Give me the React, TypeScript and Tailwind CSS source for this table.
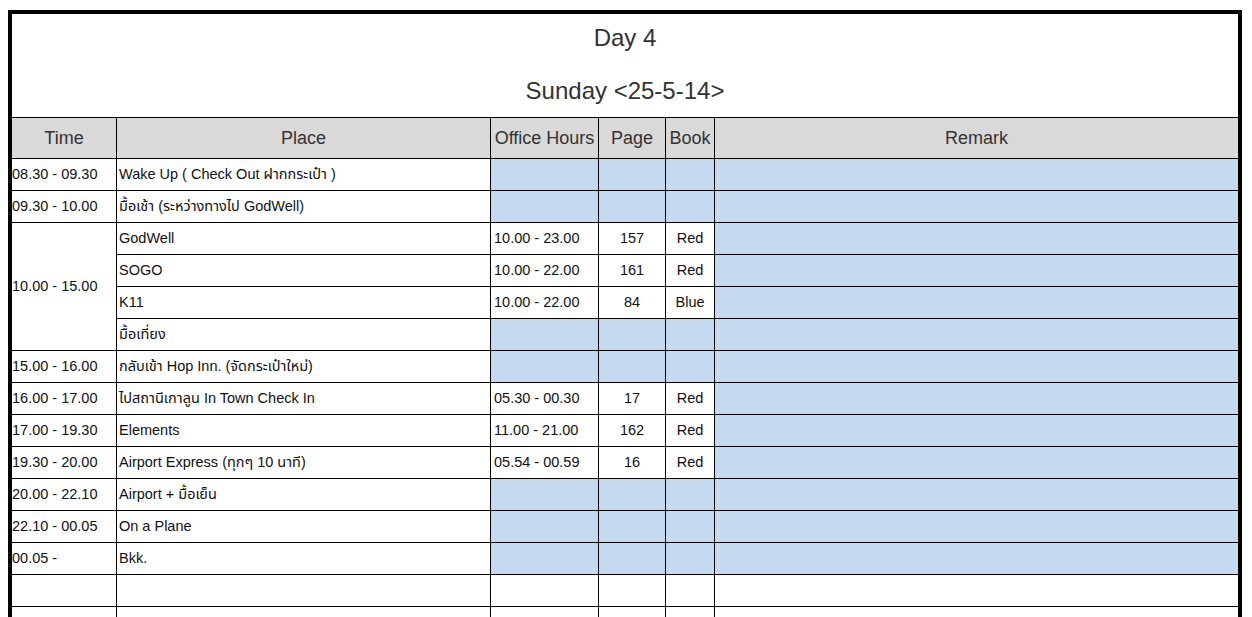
import React from 'react';

type Row = {
  time?: string;
  span?: number;
  place: string;
  hours?: string;
  page?: string;
  book?: string;
  blue?: boolean;
  skipTime?: boolean;
};

const rows: Row[] = [
  { time: '08.30 - 09.30', place: 'Wake Up ( Check Out ฝากกระเป๋า )', blue: true },
  { time: '09.30 - 10.00', place: 'มื้อเช้า (ระหว่างทางไป GodWell)', blue: true },
  { time: '10.00 - 15.00', span: 4, place: 'GodWell', hours: '10.00 - 23.00', page: '157', book: 'Red' },
  { skipTime: true, place: 'SOGO', hours: '10.00 - 22.00', page: '161', book: 'Red' },
  { skipTime: true, place: 'K11', hours: '10.00 - 22.00', page: '84', book: 'Blue' },
  { skipTime: true, place: 'มื้อเที่ยง', blue: true },
  { time: '15.00 - 16.00', place: 'กลับเข้า Hop Inn. (จัดกระเป๋าใหม่)', blue: true },
  { time: '16.00 - 17.00', place: 'ไปสถานีเกาลูน In Town Check In', hours: '05.30 - 00.30', page: '17', book: 'Red' },
  { time: '17.00 - 19.30', place: 'Elements', hours: '11.00 - 21.00', page: '162', book: 'Red' },
  { time: '19.30 - 20.00', place: 'Airport Express (ทุกๆ 10 นาที)', hours: '05.54 - 00.59', page: '16', book: 'Red' },
  { time: '20.00 - 22.10', place: 'Airport + มื้อเย็น', blue: true },
  { time: '22.10 - 00.05', place: 'On a Plane', blue: true },
  { time: '00.05 -', place: 'Bkk.', blue: true },
];

const font = { fontFamily: '"Liberation Sans", Arial, "Noto Sans Thai", "DejaVu Sans", sans-serif' };

export default function App() {
  return (
    <div className="min-h-[617px] bg-white pl-[8px] pt-[10px]" style={font}>
      <div className="w-[1234px] border-4 border-b-0 border-black">
        <div className="h-[103px] flex flex-col items-center text-[24px] text-[#333]">
          <div className="mt-[9px] leading-[30px]">Day 4</div>
          <div className="mt-[23px] leading-[30px]">Sunday &lt;25-5-14&gt;</div>
        </div>
        <div className="grid grid-cols-[104px_373px_107px_66px_48px_1fr] grid-rows-[40px] auto-rows-[31px] gap-px bg-black border-t border-black text-[14.5px] text-[#111]">
          {['Time', 'Place', 'Office Hours', 'Page', 'Book', 'Remark'].map((h) => (
            <div key={h} className="bg-[#d9d9d9] flex items-center justify-center text-[18px] text-[#333] whitespace-nowrap">
              {h}
            </div>
          ))}
          {rows.map((r, i) => {
            const fill = r.blue ? 'bg-[#c5d9f1]' : 'bg-white';
            return (
              <React.Fragment key={i}>
                {!r.skipTime && (
                  <div className={`bg-white flex items-center ${r.span === 4 ? 'row-span-4' : ''}`}>
                    {r.time}
                  </div>
                )}
                <div className="bg-white flex items-center pl-[2px] whitespace-nowrap">{r.place}</div>
                <div className={`${fill} flex items-center pl-[3px]`}>{r.hours}</div>
                <div className={`${fill} flex items-center justify-center`}>{r.page}</div>
                <div className={`${fill} flex items-center justify-center`}>{r.book}</div>
                <div className="bg-[#c5d9f1]" />
              </React.Fragment>
            );
          })}
          {[0, 1].map((k) => (
            <React.Fragment key={k}>
              <div className="bg-white" />
              <div className="bg-white" />
              <div className="bg-white" />
              <div className="bg-white" />
              <div className="bg-white" />
              <div className="bg-white" />
            </React.Fragment>
          ))}
        </div>
      </div>
    </div>
  );
}
